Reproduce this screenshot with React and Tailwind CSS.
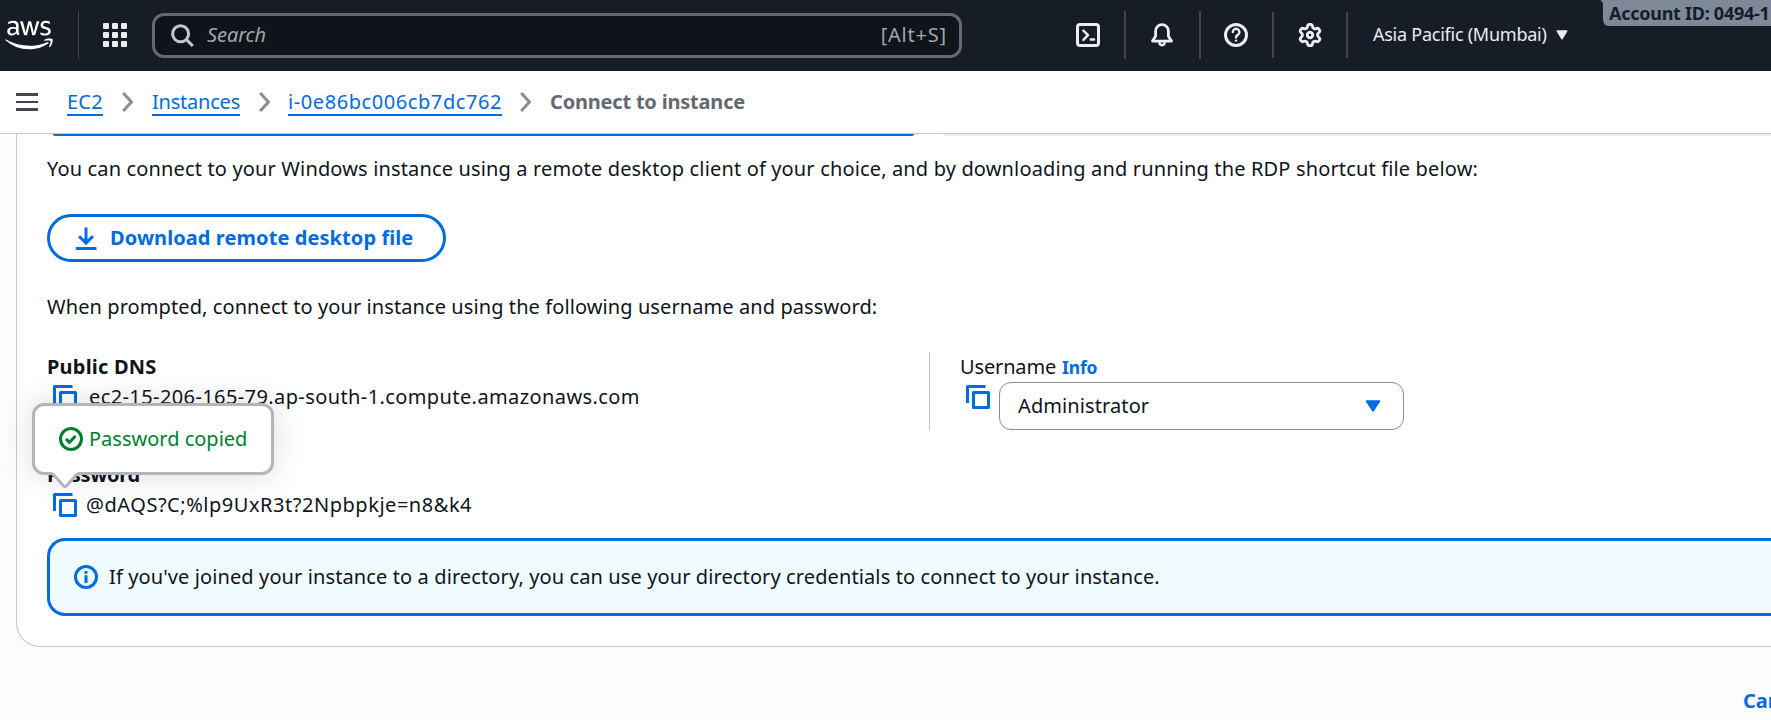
import { FaAws } from "react-icons/fa";

function CopyIcon() {
  return (
    <svg className="size-6 shrink-0 text-[#006ce0]" viewBox="0 0 16 16" fill="none" stroke="currentColor" strokeWidth="2" strokeLinejoin="round">
      <path d="M15 5H5v10h10V5Z" />
      <path d="M13 1H1v11" />
    </svg>
  );
}

function Chevron() {
  return (
    <svg className="mt-[5px] h-5 w-3 shrink-0" viewBox="0 0 12 20" fill="none" stroke="#8c8c94" strokeWidth="3">
      <path d="M1.2 1 L9.4 10 L1.2 19" />
    </svg>
  );
}

function Divider({ className = "h-12" }) {
  return <div className={`w-[2px] shrink-0 bg-[#424650] ${className}`} />;
}

function HeaderIcon({ children, className = "" }) {
  return (
    <svg className={`size-6 shrink-0 ${className}`} viewBox="0 0 24 24" fill="none" stroke="#ebebf0" strokeWidth="3" strokeLinejoin="round" strokeLinecap="round">
      {children}
    </svg>
  );
}

function TopBar() {
  return (
    <header className="relative flex h-[71px] shrink-0 items-center bg-[#161d26] pb-px text-[#ebebf0]">
      <FaAws className="ml-[5px] h-[38px] w-12 shrink-0 text-white" />
      <div className="ml-[25px] h-12 w-px shrink-0 bg-[#424650]" />
      <div className="ml-6 grid size-6 shrink-0 grid-cols-3 gap-[3px]">
        {Array.from({ length: 9 }, (_, i) => (
          <span key={i} className="size-[6px] rounded-[1px] bg-[#ebebf0]" />
        ))}
      </div>
      <div className="mt-px ml-[25px] flex h-[45px] w-[810px] shrink-0 items-center rounded-xl border-[3px] border-[#656871] bg-[#0f141a] pr-[12px] pl-4">
        <svg className="size-6 shrink-0" viewBox="0 0 24 24" fill="none" stroke="#c6c6cd" strokeWidth="3">
          <circle cx="9.6" cy="9.8" r="8" />
          <path d="M15.2 15.4 L21.8 22" />
        </svg>
        <span className="-mt-px ml-3 leading-[30px] tracking-[-0.1px] text-[#a4a4ad] italic">Search</span>
        <span className="-mt-px ml-auto leading-[30px] tracking-[0.8px] text-[#a4a4ad]">[Alt+S]</span>
      </div>
      <HeaderIcon className="ml-[114px]">
        <rect x="1.5" y="1.5" width="21" height="21" rx="2.5" />
        <path strokeWidth="2.5" d="M7.4 7.6 L12 12.2 L7.4 16.8 M14.8 16.6 H18" />
      </HeaderIcon>
      <Divider className="ml-6 h-12" />
      <HeaderIcon className="ml-6">
        <path strokeWidth="2.8" d="M5.6 13.2 V8 a6.4 6.4 0 0 1 12.8 0 v5.2 l3.1 4.9 H2.5 Z" />
        <path strokeWidth="2.4" d="M9.4 19.6 a2.6 2.6 0 0 0 5.2 0" />
      </HeaderIcon>
      <Divider className="ml-[25px] h-12" />
      <HeaderIcon className="ml-[23px]">
        <circle cx="12" cy="12" r="10.5" />
        <path strokeWidth="2.4" d="M8.8 9.1 a3.3 3.3 0 1 1 5 2.8 c-1.3 .8 -1.8 1.2 -1.8 2.5" />
        <path strokeWidth="2.4" d="M12 17.6 h.01" />
      </HeaderIcon>
      <Divider className="ml-6 h-[46px]" />
      <svg className="ml-6 size-6 shrink-0" viewBox="0.9 0.9 22.2 22.2" fill="none" stroke="#ebebf0" strokeWidth="2.7" strokeLinejoin="round">
        <path d="M9.671 4.136a2.34 2.34 0 0 1 4.659 0 2.34 2.34 0 0 0 3.319 1.915 2.34 2.34 0 0 1 2.33 4.033 2.34 2.34 0 0 0 0 3.831 2.34 2.34 0 0 1-2.33 4.033 2.34 2.34 0 0 0-3.319 1.915 2.34 2.34 0 0 1-4.659 0 2.34 2.34 0 0 0-3.32-1.915 2.34 2.34 0 0 1-2.33-4.033 2.34 2.34 0 0 0 0-3.831A2.34 2.34 0 0 1 6.35 6.051a2.34 2.34 0 0 0 3.319-1.915" />
        <circle cx="12" cy="12" r="2.5" />
      </svg>
      <Divider className="ml-6 h-[46px]" />
      <span className="-mt-px ml-[25px] w-[183px] shrink-0 text-[18px] leading-[27px] tracking-[-0.25px] whitespace-nowrap">
        Asia Pacific (Mumbai)
      </span>
      <svg className="h-[10px] w-3 shrink-0" viewBox="0 0 12 10">
        <path d="M1.2 1 H10.8 L6 8.8 Z" fill="#ebebf0" stroke="#ebebf0" strokeWidth="1.4" strokeLinejoin="round" />
      </svg>
      <div className="absolute top-0 right-0 flex h-[26px] w-[172px] items-start overflow-hidden">
        <svg className="h-[5px] w-1 shrink-0" viewBox="0 0 4 5">
          <path d="M0 0 H4 V5 C4 2 2.5 0 0 0 Z" fill="#7d8998" />
        </svg>
        <div className="h-[26px] w-[168px] rounded-bl-md bg-[#7d8998] pl-[6px] text-[18px] leading-[27px] font-bold tracking-[-0.27px] whitespace-nowrap text-[#161d26]">
          Account ID: 0494-1
        </div>
      </div>
    </header>
  );
}

function Breadcrumb() {
  return (
    <nav className="flex h-[63px] shrink-0 items-start border-b border-[#c6c6cd] bg-white pt-4 leading-[30px] whitespace-nowrap">
      <div className="mt-[6px] ml-4 flex w-[22px] shrink-0 flex-col gap-[5px]">
        <span className="h-[3px] bg-[#424650]" />
        <span className="h-[2px] bg-[#424650]" />
        <span className="h-[3px] bg-[#424650]" />
      </div>
      <a className="ml-[29px] w-[55px] tracking-[0.25px] text-[#006ce0] underline decoration-2 underline-offset-[5px]">EC2</a>
      <Chevron />
      <a className="ml-[18px] w-[107px] tracking-[-0.22px] text-[#006ce0] underline decoration-2 underline-offset-[5px]">Instances</a>
      <Chevron />
      <a className="ml-[17px] w-[232px] tracking-[0.58px] text-[#006ce0] underline decoration-2 underline-offset-[5px]">i-0e86bc006cb7dc762</a>
      <Chevron />
      <span className="ml-[18px] font-bold tracking-[-0.2px] text-[#656871]">Connect to instance</span>
    </nav>
  );
}

function CopiedPopover() {
  return (
    <div className="absolute -top-[87px] -left-[15px] z-10 h-[72px] w-[242px] rounded-xl border-[3px] border-[#b4b4bb] bg-white shadow-[0_0_30px_2px_rgba(0,7,22,0.12)]">
      <div className="flex h-full items-center gap-[6px] pl-6 text-[#00802f]">
        <svg className="size-6 shrink-0" viewBox="0 0 16 16" fill="none" stroke="currentColor" strokeWidth="2">
          <circle cx="8" cy="8" r="7" />
          <path d="m4.6 7.9 2.4 2.3 4-4.2" />
        </svg>
        <span className="leading-[30px] whitespace-nowrap">Password copied</span>
      </div>
      <svg className="absolute top-[66px] left-[15px] h-[17px] w-[30px]" viewBox="0 0 30 17">
        <path d="M1.5 0 H28.5 L15 14 Z" fill="#fff" />
        <path d="M1 1.5 Q3 2 4.5 3.7 L13.6 14 Q15 15.4 16.4 14 L25.5 3.7 Q27 2 29 1.5" fill="none" stroke="#b4b4bb" strokeWidth="3" />
      </svg>
    </div>
  );
}

function Credentials() {
  return (
    <div className="mt-[30px] flex">
      <div className="w-[882px] shrink-0">
        <div className="font-bold tracking-[0.2px]">Public DNS</div>
        <div className="flex h-[30px] pl-[6px]">
          <div className="mt-[3px]"><CopyIcon /></div>
          <span className="ml-3 tracking-[0.4px]">ec2-15-206-165-79.ap-south-1.compute.amazonaws.com</span>
        </div>
        <div className="mt-12 font-bold tracking-[-0.3px]">Password</div>
        <div className="relative flex h-[30px] pl-[6px]">
          <div className="mt-[3px]"><CopyIcon /></div>
          <span className="ml-[9px] tracking-[0.53px]">{"@dAQS?C;%lp9UxR3t?2Npbpkje=n8&k4"}</span>
          <CopiedPopover />
        </div>
      </div>
      <div className="h-[78px] border-l border-[#c6c6cd] pl-[30px]">
        <div className="flex h-[30px] items-baseline gap-[6px]">
          <span className="tracking-[-0.15px]">Username</span>
          <a className="text-[17.5px] font-bold tracking-[-0.2px] text-[#006ce0]">Info</a>
        </div>
        <div className="flex pl-[6px]">
          <div className="mt-[3px]"><CopyIcon /></div>
          <div className="ml-[9px] flex h-12 w-[405px] items-center justify-between rounded-xl border border-[#8c8c94] pr-[22px] pl-[18px]">
            <span className="tracking-[0.1px]">Administrator</span>
            <svg className="h-3 w-4" viewBox="0 0 16 12">
              <path d="M1.4 1 H14.6 L8 11 Z" fill="#006ce0" stroke="#006ce0" strokeWidth="1.4" strokeLinejoin="round" />
            </svg>
          </div>
        </div>
      </div>
    </div>
  );
}

export default function App() {
  return (
    <div className="flex h-screen flex-col overflow-hidden bg-[#fcfcfd] font-['Noto_Sans',sans-serif] text-[20px] text-[#0f141a]">
      <TopBar />
      <Breadcrumb />
      <main className="shrink-0 leading-[30px]">
        <section className="ml-4 rounded-bl-3xl border-b border-l border-[#c6c6cd] bg-white pb-[30px] pl-[30px]">
          <div className="flex h-[2px] gap-[29px] pl-[6px]">
            <div className="w-[861px] shrink-0 rounded-b-[2px] bg-[#006ce0]" />
            <div className="flex-1 rounded-bl-[2px] bg-[#ebebf0]" />
          </div>
          <p className="mt-[18px] tracking-[0.15px] whitespace-nowrap">
            You can connect to your Windows instance using a remote desktop client of your choice, and by downloading and running the RDP shortcut file below:
          </p>
          <button className="mt-[30px] flex h-12 w-[399px] items-center rounded-full border-[3px] border-[#006ce0] pl-6 font-bold text-[#006ce0]">
            <svg className="size-6" viewBox="0 0 16 16" fill="none" stroke="currentColor" strokeWidth="2">
              <path d="M1.2 15h13.8M8 1v10.6M3.4 6.8 8 11.4l4.6-4.6" />
            </svg>
            <span className="ml-3 tracking-[0.08px]">Download remote desktop file</span>
          </button>
          <p className="mt-[30px] tracking-[0.09px]">When prompted, connect to your instance using the following username and password:</p>
          <Credentials />
          <div className="mt-[18px] flex h-[78px] items-center rounded-l-[18px] border-[3px] border-r-0 border-[#006ce0] bg-[#f0fbff] pl-6">
            <svg className="size-6 text-[#006ce0]" viewBox="0 0 16 16" fill="none" stroke="currentColor" strokeWidth="2">
              <circle cx="8" cy="8" r="7" />
              <path d="M8 4v1.8M8 6.9v5.1" />
            </svg>
            <span className="ml-[11px] tracking-[0.11px]">
              If you've joined your instance to a directory, you can use your directory credentials to connect to your instance.
            </span>
          </div>
        </section>
        <div className="mt-[39px] pl-[1743px] font-bold whitespace-nowrap text-[#006ce0]">Cancel</div>
      </main>
    </div>
  );
}
